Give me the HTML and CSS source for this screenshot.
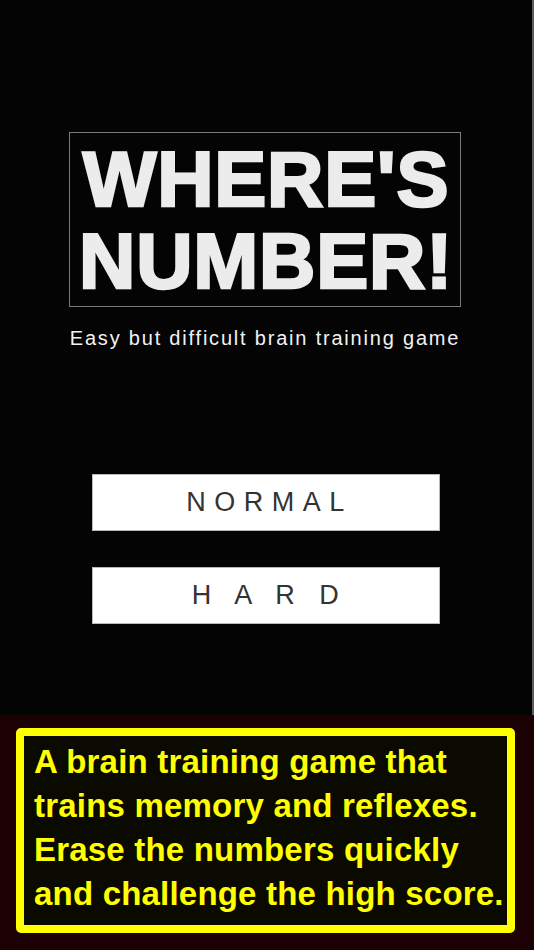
FILE: index.html
```html
<!DOCTYPE html>
<html lang="en">
<head>
<meta charset="utf-8">
<title>Where's Number!</title>
<link rel="stylesheet" href="styles.css">
</head>
<body>
<main class="screen">
  <section class="stage">
    <div class="logo">
      <div class="logo-line">WHERE'S</div>
      <div class="logo-line">NUMBER!</div>
    </div>
    <p class="tagline">Easy but difficult brain training game</p>
    <div class="modes">
      <button class="mode">NORMAL</button>
      <button class="mode">H A R D</button>
    </div>
  </section>
  <section class="promo">
    <div class="promo-box">
      A brain training game that<br>
      trains memory and reflexes.<br>
      Erase the numbers quickly<br>
      and challenge the high score.
    </div>
  </section>
</main>
</body>
</html>
```

FILE: styles.css
```css
* { box-sizing: border-box; }
html, body { margin: 0; padding: 0; background: #040404; }
.screen { width: 534px; height: 950px; display: flex; flex-direction: column; }
.stage {
  height: 715px;
  width: 534px;
  padding: 132px 2px 0 0;
  border-right: 2px solid #5e5e5e;
  background: #040404;
  display: flex;
  flex-direction: column;
  align-items: center;
}
.logo {
  width: 392px;
  height: 175px;
  border: 1px solid #7a7a7a;
  padding: 5px 0 0 2px;
  font-family: "Liberation Sans", Arial, sans-serif;
  font-weight: 700;
  font-size: 78px;
  line-height: 82px;
  color: #ececec;
  text-align: center;
  -webkit-text-stroke: 2.6px #ececec;
  letter-spacing: 0.8px;
}
.logo-line { white-space: nowrap; }
.tagline {
  margin: 18px 0 0;
  font-family: "Liberation Sans", Arial, sans-serif;
  font-size: 20px;
  line-height: 26px;
  letter-spacing: 1.8px;
  color: #f2f2f2;
}
.modes { margin: 123px 0 0 2px; display: flex; flex-direction: column; gap: 36px; }
.mode {
  width: 348px;
  height: 57px;
  background: #fff;
  border: 1px solid #b8b8b8;
  border-radius: 0;
  padding: 0 0 0 7px;
  font-family: "Liberation Sans", Arial, sans-serif;
  font-size: 27px;
  letter-spacing: 8.5px;
  color: #333;
  white-space: pre;
}
.promo {
  flex: 1;
  background: #1b0004;
  padding: 13px 0 0 16px;
}
.promo-box {
  width: 499px;
  border: 8px solid #ffff00;
  border-radius: 5px;
  background: #0b0a01;
  padding: 4px 0 9px 10px;
  font-family: "Liberation Sans", Arial, sans-serif;
  font-weight: 700;
  font-size: 33px;
  line-height: 44px;
  letter-spacing: 0.2px;
  color: #ffff00;
  white-space: nowrap;
}
```
